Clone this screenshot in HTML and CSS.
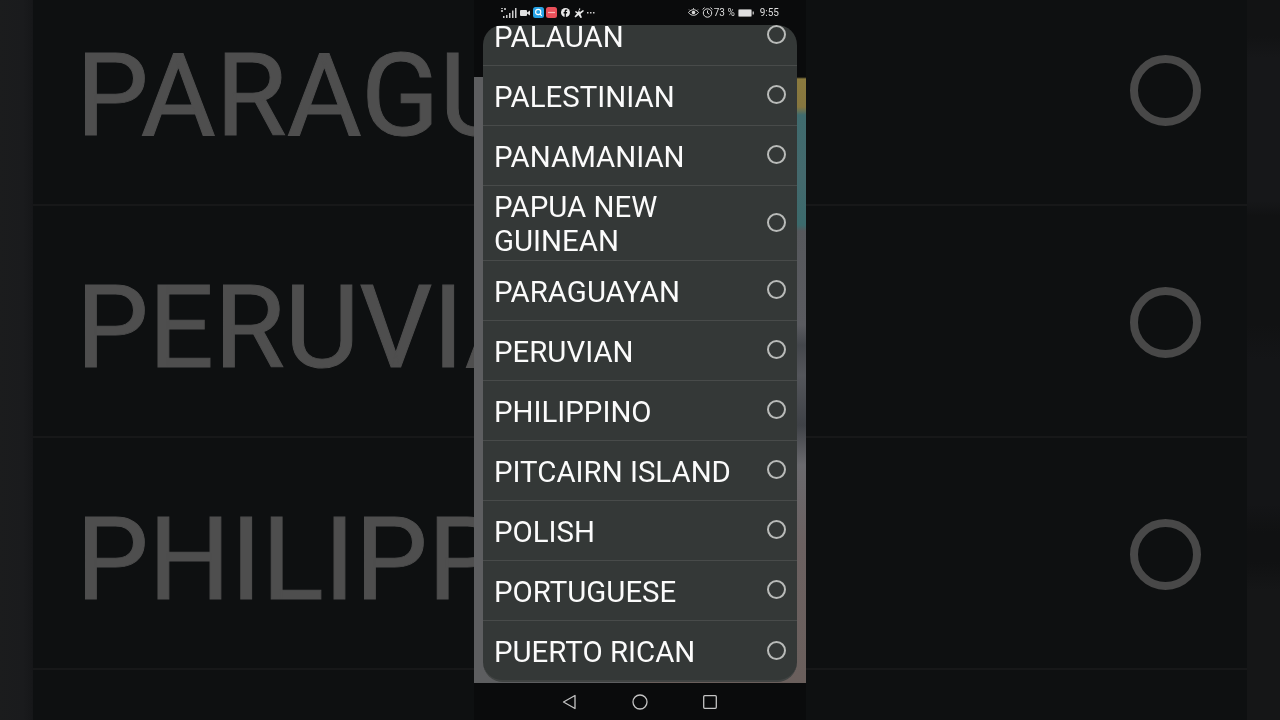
FILE: index.html
```html
<!DOCTYPE html>
<html lang="en">
<head>
<meta charset="utf-8">
<title>Nationality picker</title>
<link rel="stylesheet" href="styles.css">
</head>
<body>
<div class="stage">
  <div class="edge edge-left"></div>
  <div class="blurred">
    <div class="big-list">
      <div class="big-row"><span class="big-label">PARAGUAYAN</span><span class="big-ring"></span></div>
      <div class="big-row"><span class="big-label">PERUVIAN</span><span class="big-ring"></span></div>
      <div class="big-row"><span class="big-label">PHILIPPINO</span><span class="big-ring"></span></div>
      <div class="big-row"></div>
    </div>
  </div>
  <div class="edge edge-right"></div>

  <div class="phone">
    <div class="status">
      <div class="status-group">
        <svg class="ico" width="16" height="12" viewBox="0 0 16 12"><path d="M0 1h2v1H0zM3 1h2v2H3zM0 3h2v2H0z" fill="#aaa"/><path d="M2 9h1.5v2H2zM5 8h1.5v3H5zM8 6h1.500v5H8zM11 3.500h1.500V11H11zM14 1h1.500v10H14z" fill="#ccc"/></svg>
        <svg class="ico gap3" width="10" height="8" viewBox="0 0 10 8"><rect x="0" y="1" width="7" height="6" rx="1" fill="#e0e0e0"/><path d="M7 3.500 10 1.500v5L7 4.500z" fill="#e0e0e0"/></svg>
        <svg class="ico gap3" width="11" height="11" viewBox="0 0 11 11"><rect width="11" height="11" rx="2.500" fill="#27a3e6"/><circle cx="5.200" cy="5" r="2.600" fill="none" stroke="#fff" stroke-width="1.100"/><path d="M7 7l1.800 1.800" stroke="#fff" stroke-width="1.100"/></svg>
        <svg class="ico gap2" width="11" height="11" viewBox="0 0 11 11"><rect width="11" height="11" rx="2.500" fill="#e9505a"/><path d="M2 5.500h7" stroke="#f5b5b5" stroke-width="1.200"/></svg>
        <svg class="ico gap4" width="9" height="9" viewBox="0 0 9 9"><circle cx="4.500" cy="4.500" r="4.500" fill="#e8e8e8"/><path d="M3.600 9V5.400H2.600V4h1V3c0-1 .7-1.600 1.600-1.600h1v1.300h-.7c-.4 0-.6.2-.6.6V4h1.300l-.2 1.400H4.900V9z" fill="#0a0b0c"/></svg>
        <svg class="ico gap4" width="10" height="10" viewBox="0 0 10 10"><path d="M5.500 0 6.500 1 5 2.500l1 1.500 3-2 1 1-3.500 3L8 9.500 6.500 10 4.500 7 1.500 9.500.5 8.500 3 5.500 1 4l.8-1L4 4.200z" fill="#e8e8e8"/></svg>
        <svg class="ico gap3" width="8" height="2" viewBox="0 0 8 2"><path d="M0 0h1.500v1.500H0zM3 0h1.500v1.500H3zM6 0h1.500v1.500H6z" fill="#ccc"/></svg>
      </div>
      <div class="status-group">
        <svg class="ico" width="11" height="9" viewBox="0 0 11 9"><path d="M.5 4.500C2 2.500 3.700 1.700 5.500 1.700s3.500.8 5 2.800C9 6.500 7.300 7.300 5.500 7.300S2 6.500.5 4.500z" fill="none" stroke="#ddd" stroke-width="1"/><circle cx="5.500" cy="4.500" r="1.800" fill="#ddd"/><path d="M1 1.500l1 1M5.500 0v1.200M10 1.500l-1 1" stroke="#ddd" stroke-width=".8"/></svg>
        <svg class="ico gap3" width="11" height="11" viewBox="0 0 11 11"><circle cx="5.500" cy="6" r="4.200" fill="none" stroke="#ddd" stroke-width="1"/><path d="M5.500 3.500V6l1.800 1.200M.6 2.400 2.600.6M10.400 2.400 8.400.6" fill="none" stroke="#ddd" stroke-width="1"/></svg>
        <span class="status-text gap1">73 %</span>
        <svg class="ico gap3" width="16" height="8" viewBox="0 0 16 8"><rect x=".5" y=".5" width="13" height="7" rx="1" fill="#e0e0e0" stroke="#8a8a8a"/><rect x="14.500" y="2.500" width="1.500" height="3" fill="#aaa"/></svg>
        <span class="status-text gap6">9:55</span>
      </div>
    </div>

    <div class="screen">
      <div class="sheet">
        <ul class="options">
          <li class="option"><span class="option-label">PALAUAN</span><span class="radio"></span></li>
          <li class="option"><span class="option-label">PALESTINIAN</span><span class="radio"></span></li>
          <li class="option"><span class="option-label">PANAMANIAN</span><span class="radio"></span></li>
          <li class="option option-tall"><span class="option-label">PAPUA NEW GUINEAN</span><span class="radio"></span></li>
          <li class="option"><span class="option-label">PARAGUAYAN</span><span class="radio"></span></li>
          <li class="option"><span class="option-label">PERUVIAN</span><span class="radio"></span></li>
          <li class="option"><span class="option-label">PHILIPPINO</span><span class="radio"></span></li>
          <li class="option"><span class="option-label">PITCAIRN ISLAND</span><span class="radio"></span></li>
          <li class="option"><span class="option-label">POLISH</span><span class="radio"></span></li>
          <li class="option"><span class="option-label">PORTUGUESE</span><span class="radio"></span></li>
          <li class="option option-last"><span class="option-label">PUERTO RICAN</span><span class="radio"></span></li>
        </ul>
      </div>
    </div>

    <div class="nav">
      <svg width="14" height="16" viewBox="0 0 14 16"><path d="M13 1.500v13L1.500 8z" fill="none" stroke="#c4c4c4" stroke-width="1.300" stroke-linejoin="round"/></svg>
      <svg width="16" height="16" viewBox="0 0 16 16"><circle cx="8" cy="8" r="7" fill="none" stroke="#c4c4c4" stroke-width="1.300"/></svg>
      <svg width="14" height="14" viewBox="0 0 14 14"><rect x=".7" y=".7" width="12.600" height="12.600" rx="1" fill="none" stroke="#c4c4c4" stroke-width="1.300"/></svg>
    </div>
  </div>
</div>
</body>
</html>
```

FILE: styles.css
```css
* { box-sizing: border-box; }
html, body { margin: 0; height: 100%; background: #0e1011; }
.stage {
  position: relative;
  display: flex;
  width: 1280px;
  height: 720px;
  overflow: hidden;
  font-family: Roboto, "Liberation Sans", sans-serif;
}
.edge { flex: none; }
.edge-left { width: 33px; background: linear-gradient(90deg, #1b1c1d 0%, #1a1b1d 70%, #161719 100%); }
.edge-right {
  width: 33px;
  background: linear-gradient(180deg, #121314 0 5%, #161719 8% 28%, #111213 30% 45%, #141517 50% 70%, #101112 74% 78%, #151617 82% 100%);
}
.blurred { flex: 1; min-width: 0; overflow: hidden; background: #0e1011; }
.big-list { margin-top: -26px; }
.big-row {
  height: 232px;
  display: flex;
  align-items: center;
  justify-content: space-between;
  padding: 4px 46px 0 43px;
  border-bottom: 2px solid #171819;
}
.big-label {
  margin-top: 8px;
  font-size: 115px;
  line-height: 1;
  color: #4e4e4e;
  white-space: nowrap;
  -webkit-text-stroke: 1px #4e4e4e;
  filter: blur(.6px);
}
.big-ring {
  flex: none;
  width: 71px;
  height: 71px;
  margin-top: -1px;
  border: 8px solid #484848;
  border-radius: 50%;
  filter: blur(.5px);
}

.phone {
  position: absolute;
  top: 0;
  left: 474px;
  width: 332px;
  height: 720px;
  display: flex;
  flex-direction: column;
  background: #0a0b0c;
}
.status {
  flex: none;
  height: 25px;
  padding: 0 27px;
  display: flex;
  justify-content: space-between;
  align-items: center;
  background: #0a0b0c;
}
.status-group { display: flex; align-items: center; filter: blur(.25px); }
.status-text { font-size: 10px; line-height: 12px; color: #dcdcdc; }
.ico { flex: none; display: block; }
.gap1 { margin-left: 1px; }
.gap2 { margin-left: 2px; }
.gap3 { margin-left: 3px; }
.gap4 { margin-left: 4px; }
.gap6 { margin-left: 6px; }

.screen {
  flex: 1;
  min-height: 0;
  padding: 0 9px 1px;
  display: flex;
  background:
    linear-gradient(180deg, #0a0b0c 0 52px, #5d5e60 52px 100%) left / 50% 100% no-repeat,
    linear-gradient(180deg, #0a0b0c 0 52px, #8b7a3e 54px, #86763f 82px, #3f6b6e 90px, #44696d 150px, #3b6a6c 200px, #56585c 206px, #5a5b60 300px, #44474c 320px, #54565b 350px, #3f4247 400px, #6a6a6e 440px, #6b6161 520px, #6a5f5c 658px) right / 50% 100% no-repeat;
}
.sheet {
  flex: 1;
  min-width: 0;
  overflow: hidden;
  background: #343837;
  border-radius: 20px;
  border-bottom: 2px solid #414443;
}
.options { list-style: none; margin: -19px 0 0; padding: 0; }
.option {
  height: 60px;
  padding: 0 11px 0 9px;
  display: flex;
  align-items: center;
  justify-content: space-between;
  gap: 16px;
  border-bottom: 1px solid #484b4a;
}
.option-tall { height: 75px; }
.option-last { border-bottom: 0; }
.option-label {
  font-size: 29.400px;
  line-height: 34px;
  color: #fbfbfb;
  margin: 2px 0 0 2px;
  filter: blur(.25px);
}
.radio {
  flex: none;
  width: 19px;
  height: 19px;
  margin-top: -2px;
  border: 2px solid #b9bbb9;
  border-radius: 50%;
}

.nav {
  flex: none;
  height: 37px;
  padding: 0 89px 0 88px;
  display: flex;
  align-items: center;
  justify-content: space-between;
  background: #0a0b0c;
}
```
